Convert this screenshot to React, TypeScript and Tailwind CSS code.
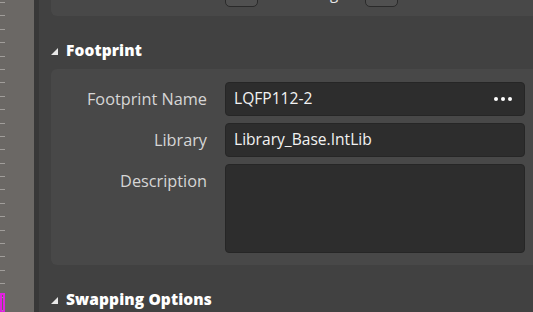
import { Fragment } from 'react';

const ticks = Array.from({ length: 24 }, (_, i) => i);

const Triangle = () => (
  <svg width="7" height="7" viewBox="0 0 7 7" className="shrink-0">
    <path d="M7 0 L7 7 L0 7 Z" fill="#e8e8e8" />
  </svg>
);

const SectionHeader = ({ title }: { title: string }) => (
  <div className="flex items-center gap-[8px] pl-[12px] h-[22px]">
    <Triangle />
    <span className="text-[15.5px] font-extrabold text-white leading-none tracking-[0.1px]">{title}</span>
  </div>
);

const Field = ({ label, value, dots }: { label: string; value: string; dots?: boolean }) => (
  <Fragment>
    <div className="text-right text-[16.3px] text-[#d6d6d6] leading-[34px] pr-[18px]">{label}</div>
    <div className="h-[34px] rounded-[4px] bg-[#2d2d2d] border border-[#262626] flex items-center pl-[8px] pr-[12px]">
      <span className="flex-1 text-[15.6px] text-[#f2f2f2]">{value}</span>
      {dots && (
        <div className="flex gap-[3px]">
          <span className="w-[4px] h-[4px] rounded-full bg-white" />
          <span className="w-[4px] h-[4px] rounded-full bg-white" />
          <span className="w-[4px] h-[4px] rounded-full bg-white" />
        </div>
      )}
    </div>
  </Fragment>
);

export default function App() {
  return (
    <div
      className="w-[533px] h-[312px] overflow-hidden flex bg-[#414141]"
      style={{ fontFamily: '"Open Sans", "Noto Sans", sans-serif' }}
    >
      {/* left ruler strip */}
      <div className="w-[34px] shrink-0 bg-[#6b6865] relative">
        <div className="pt-[2px]">
          {ticks.map((t) => (
            <div key={t} className="h-[13.4px]">
              <div className="w-[5px] h-px bg-[#a09d9a]" />
            </div>
          ))}
        </div>
        <div className="absolute left-0 top-[293px] w-[5px] h-[20px] border-2 border-[#e020e0]" />
      </div>
      <div className="w-[5px] shrink-0 bg-[#383838]" />

      {/* properties panel */}
      <div className="flex-1 flex flex-col pl-[12px]">
        {/* previous card, cut off at top */}
        <div className="h-[16px] shrink-0 bg-[#484848] rounded-bl-[6px] relative overflow-hidden">
          <div className="absolute left-[174px] top-[-20px] w-[33px] h-[27px] rounded-[5px] bg-[#505050] border border-[#2a2a2a]" />
          <div className="absolute left-[279px] top-[-14px] text-[15px] text-[#e8e8e8] leading-none">g</div>
          <div className="absolute left-[314px] top-[-20px] w-[33px] h-[27px] rounded-[5px] bg-[#505050] border border-[#2a2a2a]" />
        </div>

        <div className="mt-[24px] ml-[-12px]">
          <SectionHeader title="Footprint" />
        </div>

        <div className="mt-[7px] bg-[#484848] rounded-l-[6px] pt-[13px] pb-[12px] pr-[8px]">
          <div className="grid grid-cols-[174px_1fr] gap-y-[7px]">
            <Field label="Footprint Name" value="LQFP112-2" dots />
            <Field label="Library" value="Library_Base.IntLib" />
            <div className="text-right text-[16.3px] text-[#d6d6d6] leading-[34px] pr-[18px]">Description</div>
            <div className="h-[89px] rounded-[4px] bg-[#2d2d2d] border border-[#262626]" />
          </div>
        </div>

        <div className="mt-[24px] ml-[-12px]">
          <SectionHeader title="Swapping Options" />
        </div>
      </div>
    </div>
  );
}
